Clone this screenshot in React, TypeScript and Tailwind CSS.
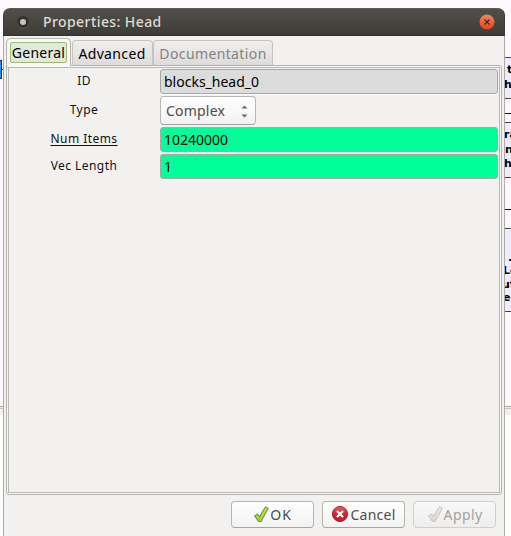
import React from "react";

function Check({ muted }: { muted?: boolean }) {
  return (
    <svg width="17" height="18" viewBox="0 0 17 18" className="relative -top-px shrink-0">
      <defs>
        <linearGradient id={muted ? "cm" : "cg"} x1="0" y1="0" x2="0" y2="1">
          <stop offset="0" stopColor={muted ? "#ececea" : "#c6e45c"} />
          <stop offset="1" stopColor={muted ? "#d8d8d5" : "#a0cc3c"} />
        </linearGradient>
      </defs>
      <path
        d="M1.6 10.9 4.4 9.1 6.6 11.6 12.4 2 15.2 3.2 8 16.4 5.6 16.5Z"
        fill={muted ? "url(#cm)" : "url(#cg)"}
        stroke={muted ? "#c8c9c4" : "#6f9a38"}
        strokeWidth="1.1"
        strokeLinejoin="round"
      />
    </svg>
  );
}

function CancelIcon() {
  return (
    <svg width="18" height="18" viewBox="0 0 18 18" className="relative -top-px shrink-0">
      <defs>
        <linearGradient id="red" x1="0" y1="0" x2="0" y2="1">
          <stop offset="0" stopColor="#e0686c" />
          <stop offset="0.5" stopColor="#cc2830" />
          <stop offset="1" stopColor="#c31824" />
        </linearGradient>
      </defs>
      <circle cx="9" cy="9" r="7.6" fill="url(#red)" stroke="#a52730" />
      <path d="M6.8 6.8 11.2 11.2M11.2 6.8 6.8 11.2" stroke="#fff" strokeWidth="2.3" strokeLinecap="square" />
    </svg>
  );
}

const nodes = [
  { box: "top-[57px] h-[42px]", lines: [["t", "left-[2px] top-[5px]"], ["h", "left-[-1px] top-[20px]"]] },
  { box: "top-[122px] h-[56px]", lines: [["ra", "left-[-1px] top-[5px]"], ["n", "left-0 top-[20px]"], ["h", "left-[-1px] top-[34px]"]] },
  { box: "top-[228px] h-[84px]", lines: [[".", "left-[3px] top-[22px]"], ["Lo", "left-[-2px] top-[35px]"], ["ut", "left-[-3px] top-[49px]"], ["er", "left-[-2px] top-[62px]"]] },
];

function Divider() {
  return <div className="absolute inset-x-0 top-[406px] h-[9px] border-t border-[#aaa9a4] bg-[#f2f1f0]"><div className="mt-px h-px bg-[#c4c3be]" /></div>;
}

function Field({ value, className }: { value: string; className: string }) {
  return (
    <div className={"flex h-[25px] items-center rounded-[3px] border border-[#a9a8a3] pl-[3px] text-[14px] text-black shadow-[0_1px_0_#fafafa] " + className}>
      <span className="whitespace-pre">{value}</span>
    </div>
  );
}

function Button({ children, muted }: { children: React.ReactNode; muted?: boolean }) {
  return (
    <div className={"flex h-[27px] w-[83px] items-center justify-center rounded-[4px] border text-[14px] " + (muted ? "border-[#cfcecb] bg-gradient-to-b from-[#f8f8f8] to-[#efeeed] text-[#a4a19c]" : "border-[#b7b5b1] border-b-[#a6a4a0] bg-gradient-to-b from-white to-[#f3f2f2] text-[#4c4c4c]")}>
      {children}
    </div>
  );
}

function Label({ children, className }: { children: React.ReactNode; className: string }) {
  return (
    <div className={"flex items-center justify-center pr-px text-[12px] tracking-[0.45px] text-[#111] " + className}>
      <span>{children}</span>
    </div>
  );
}

export default function App() {
  return (
    <div className="relative flex h-[536px] w-[511px] overflow-hidden bg-white font-['Noto_Sans',sans-serif]">
      <div className="absolute inset-x-0 top-0 h-[406px] bg-[#fef8ff]" />
      <div className="relative w-[3px] shrink-0">
        <div className="absolute left-0 top-[60px] h-[19px] w-[2px] border-y border-r border-[#333] bg-[#1e90ff]" />
        <div className="absolute left-[2px] top-[69px] h-px w-px bg-black" />
        <Divider />
      </div>

      <div className="relative mt-[8px] flex h-[528px] w-[502px] shrink-0 flex-col">
        <header className="flex h-[28px] shrink-0 items-center rounded-t-[7px] border border-b-[#302f2b] border-t-[#5c5b55] border-x-[#3c3b37] bg-gradient-to-b from-[#504f49] to-[#3d3c38]">
          <span className="ml-[13px] flex size-[12px] items-center justify-center rounded-full bg-[#33322e] shadow-[0_1px_0_#5c5b54]">
            <span className="size-[6px] rounded-full bg-[#c9c2b8]" />
          </span>
          <span className="ml-[14px] whitespace-pre text-[14px] font-medium leading-[20px] tracking-[0.42px] text-[#dfdbd2]">Properties: Head</span>
          <svg className="ml-auto mr-[9px]" width="16" height="16" viewBox="0 0 16 16">
            <defs>
              <linearGradient id="close" x1="0" y1="0" x2="0" y2="1">
                <stop offset="0" stopColor="#f58464" />
                <stop offset=".5" stopColor="#ed6239" />
                <stop offset="1" stopColor="#df4a18" />
              </linearGradient>
            </defs>
            <circle cx="8" cy="8" r="7.5" fill="url(#close)" />
            <path d="M5.5 5.5l5 5M10.5 5.5l-5 5" stroke="#3b2a22" strokeWidth="1.2" />
          </svg>
        </header>

        <main className="flex grow flex-col border-x border-[#acaba6] bg-[#f2f1f0] px-[2px] pt-[2px]">
          <div className="relative z-10 -mb-px flex h-[28px] shrink-0 items-end">
            <div className="flex h-[28px] w-[65px] rounded-t-[5px] border border-b-0 border-[#b5b4ae] bg-[#f8f8f6] p-[3px]">
              <div className="flex h-[21px] w-[57px] items-center justify-center rounded-[2px] border border-[#9dba76] bg-[#e3e9d9] text-[14px] text-black">
                <span className="whitespace-pre tracking-[0.25px]">General</span>
              </div>
            </div>
            <div className="ml-px flex h-[26px] w-[81px] items-center justify-center rounded-t-[4px] border border-[#c5c4c0] border-b-[#b0afaa] bg-gradient-to-b from-[#f0efee] to-[#dddcda] pr-px text-[14px] text-black">
              <span className="whitespace-pre tracking-[0.35px]">Advanced</span>
            </div>
            <div className="flex h-[26px] w-[120px] items-center justify-center rounded-t-[4px] border border-[#c5c4c0] border-b-[#b0afaa] bg-gradient-to-b from-[#f0efee] to-[#dddcda] text-[14px] text-[#85827e]">
              <span className="whitespace-pre tracking-[0.38px]">Documentation</span>
            </div>
          </div>

          <section className="h-[430px] w-[496px] shrink-0 rounded-b-[3px] rounded-tr-[3px] border border-[#b3b2ac] bg-[#f8f8f7] p-px">
            <div className="grid h-full grid-cols-[151px_338px] grid-rows-[27px_31px_27px_27px] content-start border border-[#b9b8b2] bg-[#f2f1f0] pt-px">
              <Label className="h-[24px]">ID</Label>
              <Field value="blocks_head_0" className="bg-[#dcdcdc]" />
              <Label className="h-[28px]">Type</Label>
              <div className="flex h-[29px] w-[96px] items-center justify-between rounded-[4px] border border-[#b9b7b3] border-b-[#a6a4a0] bg-gradient-to-b from-white to-[#f3f2f2] pl-[5px] pr-[7px] text-[14px] text-[#4c4c4c]">
                <span className="whitespace-pre tracking-[0.2px]">Complex</span>
                <svg width="7" height="14" viewBox="0 0 7 14"><path d="M.5 4.5 3.5 1.5l3 3ZM.5 10.5l3 3 3-3Z" fill="#6b6b68" /></svg>
              </div>
              <Label className="h-[24px] underline underline-offset-2">Num Items</Label>
              <Field value="10240000" className="bg-[#00ff99]" />
              <Label className="h-[23px]">Vec Length</Label>
              <Field value="1" className="bg-[#00ff99]" />
            </div>
          </section>

          <footer className="flex justify-end gap-[8px] pr-[6px] pt-[6px]">
            <Button><Check /><span className="tracking-[0.9px]">OK</span></Button>
            <Button><CancelIcon /><span className="ml-px tracking-[0.25px]">Cancel</span></Button>
            <Button muted><Check muted /><span className="tracking-[0.4px]">Apply</span></Button>
          </footer>
        </main>
      </div>

      <div className="relative w-[6px] shrink-0 overflow-hidden">
        {nodes.map((n) => (
          <div key={n.box} className={"absolute inset-x-0 overflow-hidden border-y border-[#454349] bg-[#f0ecff] " + n.box}>
            {n.lines.map(([t, p]) => (
              <span key={p} className={"absolute font-['DejaVu_Sans',sans-serif] text-[11px] font-bold leading-[13px] text-black " + p}>{t}</span>
            ))}
          </div>
        ))}
        <div className="absolute inset-x-0 top-[113px] h-px bg-black" />
        <div className="absolute inset-x-0 top-[209px] h-px bg-black" />
        <Divider />
      </div>
    </div>
  );
}
